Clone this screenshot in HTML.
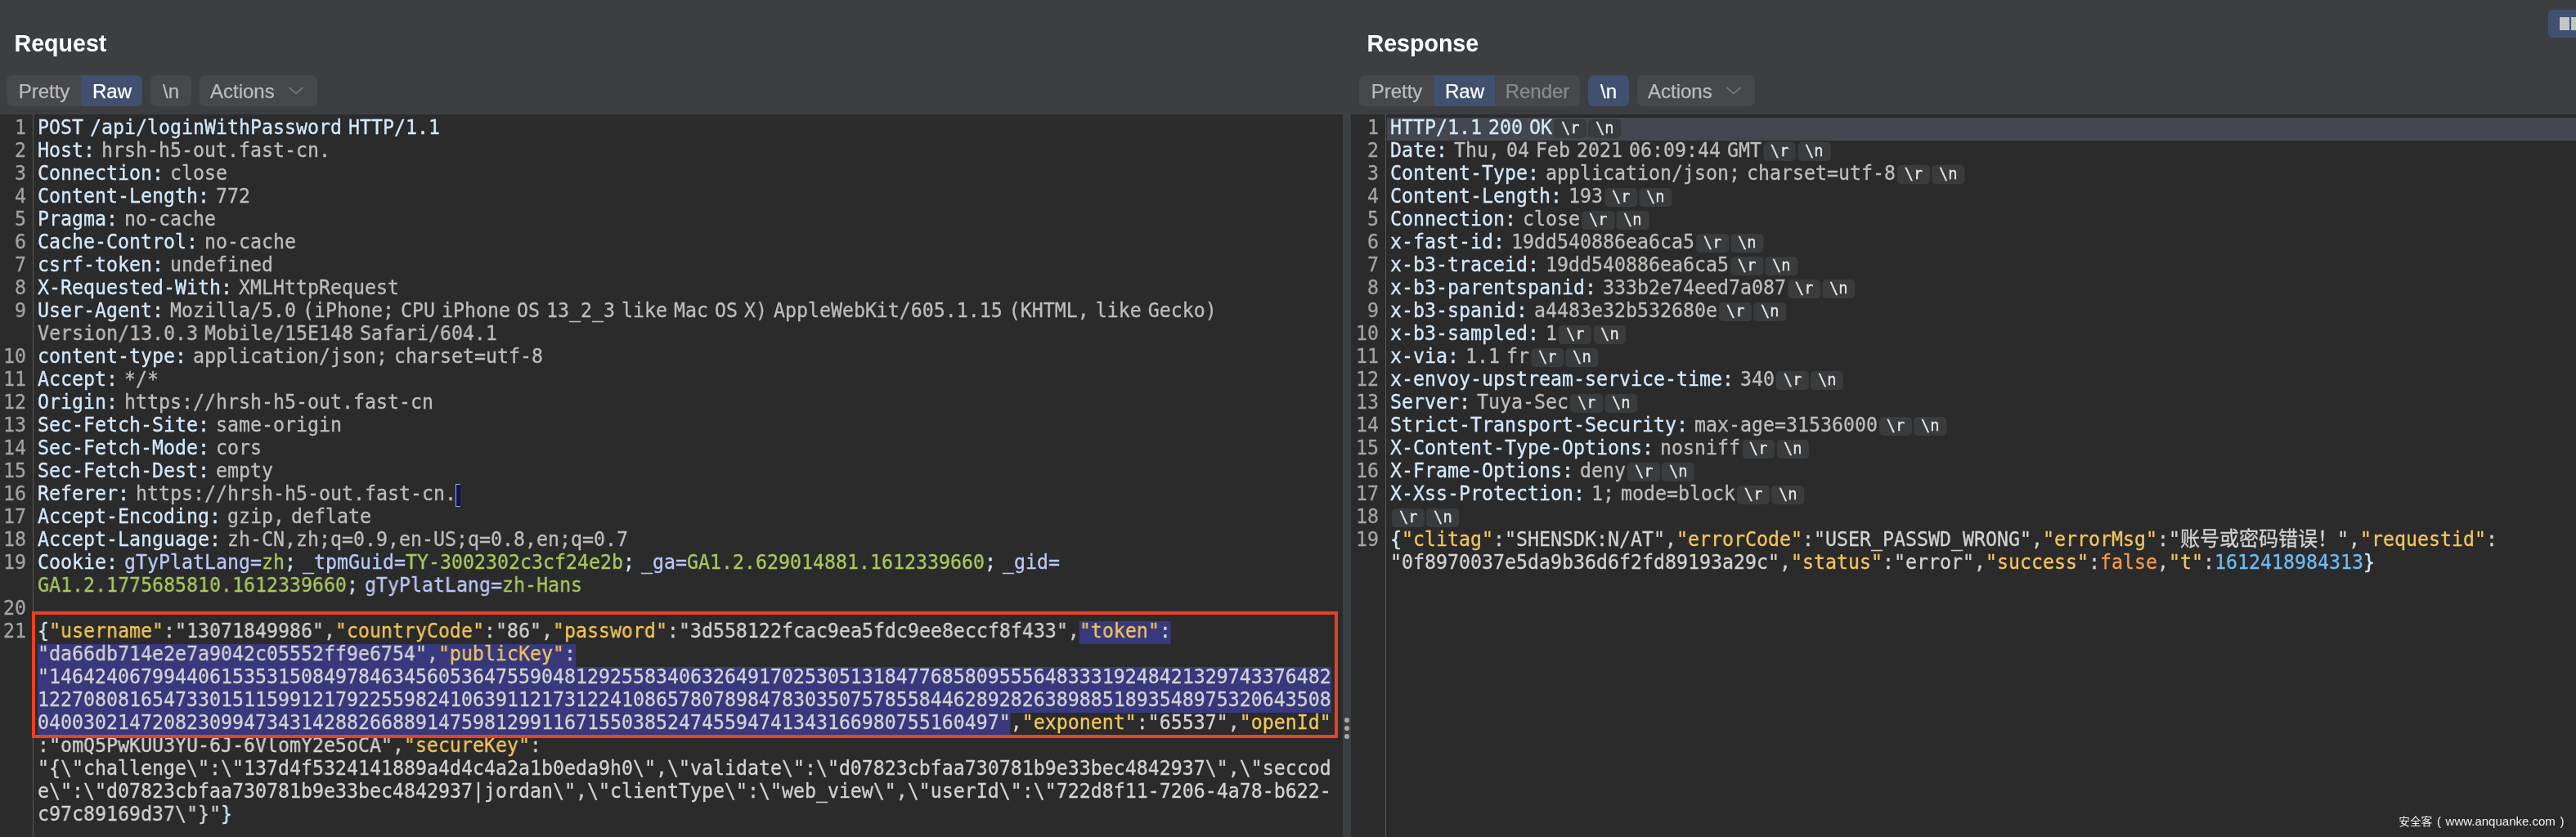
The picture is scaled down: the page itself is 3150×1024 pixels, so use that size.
<!DOCTYPE html>
<html lang="en"><head><meta charset="utf-8"><title>Burp Suite - Request / Response</title>
<style>
*{margin:0;padding:0;box-sizing:border-box}
html,body{width:3150px;height:1024px;overflow:hidden;background:#2b2b2b}
body{position:relative;font-family:"Liberation Sans",sans-serif}
.abs{position:absolute}
#wrap{position:absolute;left:0;top:0;width:3150px;height:1024px;will-change:transform}
#top{left:0;top:0;width:3150px;height:140px;background:#3c3f41}
#split{left:1642px;top:140px;width:10px;height:884px;background:#3c3f41}
.dot{position:absolute;left:1644px;width:6px;height:6px;border-radius:3px;background:#a9a9a9}
.gl{position:absolute;top:140px;width:1px;height:884px;background:#555759}
h1{position:absolute;font-size:28.6px;font-weight:bold;color:#fff;line-height:34px;white-space:nowrap}
.btn{position:absolute;top:92px;height:38px;background:#47484a;color:#bbbbbb;font-size:24px;line-height:40px;text-align:center;white-space:nowrap;-webkit-text-stroke:0.25px}
.btn.on{background:#40506f;color:#fff}
.btn.dis{color:#8a8a8a}
.rl{border-radius:7px 0 0 7px}.rr{border-radius:0 7px 7px 0}.ra{border-radius:7px}
.row,.ln{position:absolute;font-family:"DejaVu Sans Mono","Liberation Mono",monospace;font-size:24.3px;line-height:28px;height:28px;white-space:pre;transform:scaleX(0.95695);word-spacing:-6.270px;-webkit-text-stroke:0.3px}
.row{transform-origin:0 0}
.ln{width:60px;text-align:right;color:#a3a3a3;transform-origin:100% 0}
.h{color:#d2e9fb}.v{color:#bfbdbb}.s{color:#d2d2d2}.k{color:#f2c55c}.cn{color:#b9c8f7}.cv{color:#a8c760}.sc{color:#d4e6f6}.b{color:#f29950}.n{color:#6ebbf3}
.cjk{font-family:"Liberation Sans","Noto Sans CJK SC","WenQuanYi Zen Hei",sans-serif;color:#d2d2d2;font-size:25.08px;line-height:0}
.sel{position:relative;display:inline-block;height:28px;vertical-align:top}
.sel::before{content:"";position:absolute;left:0;right:0;top:2.2px;height:28px;background:#38387c;z-index:-1}
.nl{display:inline-block;vertical-align:top;width:41.80px;height:23.5px;margin:4.2px 0 0 2.30px;border-radius:5px;background:#393b3d;color:#e6e6e6;font-size:19.6px;line-height:21px;text-align:center;word-spacing:0}
.caret{display:inline-block;vertical-align:top;width:5.02px;height:28px;margin-top:2.2px;margin-left:-0.5px;background:#0c1158;border:1.5px solid #a9b1dd;border-right:none}
#hl{left:1696px;top:144px;width:1454px;height:28px;background:#444750}
#red{left:39px;top:748px;width:1597px;height:155px;border:4px solid #ea4025}
#wm{right:14.5px;top:995px;font-size:13.7px;line-height:20px;color:#f0f0f0;white-space:nowrap;font-family:"Liberation Sans","Noto Sans CJK SC",sans-serif}
#wm span{font-family:"Liberation Sans",sans-serif;font-size:15px;word-spacing:1.5px}
#ico{left:3116px;top:12px;width:50px;height:34px;border-radius:6px;background:#40506f}
#ico i{position:absolute;top:9px;width:12px;height:16px;background:#c4c4c4}
</style></head>
<body>
<div id="wrap">
<div id="top" class="abs"></div>
<div id="split" class="abs"></div>
<div class="dot" style="top:878px"></div>
<div class="dot" style="top:888px"></div>
<div class="dot" style="top:898px"></div>
<div id="ico" class="abs"><i style="left:14px"></i><i style="left:28px"></i></div>
<h1 style="left:17.5px;top:36px">Request</h1>
<div class="btn rl" style="left:8px;width:92px">Pretty</div>
<div class="btn on rr" style="left:100px;width:74px">Raw</div>
<div class="btn ra" style="left:184px;width:50px">\n</div>
<div class="btn ra" style="left:244px;width:144px;text-align:left;padding-left:13px">Actions<svg class="abs" style="left:108px;top:13px" width="20" height="12" viewBox="0 0 20 12"><path d="M1.5 2 L10 9.5 L18.5 2" fill="none" stroke="#737373" stroke-width="1.9"/></svg></div>
<h1 style="left:1671.5px;top:36px">Response</h1>
<div class="btn rl" style="left:1662px;width:92px">Pretty</div>
<div class="btn on" style="left:1754px;width:74px">Raw</div>
<div class="btn dis rr" style="left:1828px;width:104px">Render</div>
<div class="btn on ra" style="left:1942px;width:50px">\n</div>
<div class="btn ra" style="left:2002px;width:144px;text-align:left;padding-left:13px">Actions<svg class="abs" style="left:108px;top:13px" width="20" height="12" viewBox="0 0 20 12"><path d="M1.5 2 L10 9.5 L18.5 2" fill="none" stroke="#737373" stroke-width="1.9"/></svg></div>
<div class="gl" style="left:40px"></div>
<div class="gl" style="left:1694px"></div>
<div id="hl" class="abs"></div>
<div class="ln" style="top:141.8px;left:-28px">1</div>
<div class="row" style="top:141.8px;left:46px"><span class="h">POST /api/loginWithPassword HTTP/1.1</span></div>
<div class="ln" style="top:169.8px;left:-28px">2</div>
<div class="row" style="top:169.8px;left:46px"><span class="h">Host:</span><span class="v"> hrsh-h5-out.fast-cn.</span></div>
<div class="ln" style="top:197.8px;left:-28px">3</div>
<div class="row" style="top:197.8px;left:46px"><span class="h">Connection:</span><span class="v"> close</span></div>
<div class="ln" style="top:225.8px;left:-28px">4</div>
<div class="row" style="top:225.8px;left:46px"><span class="h">Content-Length:</span><span class="v"> 772</span></div>
<div class="ln" style="top:253.8px;left:-28px">5</div>
<div class="row" style="top:253.8px;left:46px"><span class="h">Pragma:</span><span class="v"> no-cache</span></div>
<div class="ln" style="top:281.8px;left:-28px">6</div>
<div class="row" style="top:281.8px;left:46px"><span class="h">Cache-Control:</span><span class="v"> no-cache</span></div>
<div class="ln" style="top:309.8px;left:-28px">7</div>
<div class="row" style="top:309.8px;left:46px"><span class="h">csrf-token:</span><span class="v"> undefined</span></div>
<div class="ln" style="top:337.8px;left:-28px">8</div>
<div class="row" style="top:337.8px;left:46px"><span class="h">X-Requested-With:</span><span class="v"> XMLHttpRequest</span></div>
<div class="ln" style="top:365.8px;left:-28px">9</div>
<div class="row" style="top:365.8px;left:46px"><span class="h">User-Agent:</span><span class="v"> Mozilla/5.0 (iPhone; CPU iPhone OS 13_2_3 like Mac OS X) AppleWebKit/605.1.15 (KHTML, like Gecko)</span></div>
<div class="row" style="top:393.8px;left:46px"><span class="v">Version/13.0.3 Mobile/15E148 Safari/604.1</span></div>
<div class="ln" style="top:421.8px;left:-28px">10</div>
<div class="row" style="top:421.8px;left:46px"><span class="h">content-type:</span><span class="v"> application/json; charset=utf-8</span></div>
<div class="ln" style="top:449.8px;left:-28px">11</div>
<div class="row" style="top:449.8px;left:46px"><span class="h">Accept:</span><span class="v"> */*</span></div>
<div class="ln" style="top:477.8px;left:-28px">12</div>
<div class="row" style="top:477.8px;left:46px"><span class="h">Origin:</span><span class="v"> https://hrsh-h5-out.fast-cn</span></div>
<div class="ln" style="top:505.8px;left:-28px">13</div>
<div class="row" style="top:505.8px;left:46px"><span class="h">Sec-Fetch-Site:</span><span class="v"> same-origin</span></div>
<div class="ln" style="top:533.8px;left:-28px">14</div>
<div class="row" style="top:533.8px;left:46px"><span class="h">Sec-Fetch-Mode:</span><span class="v"> cors</span></div>
<div class="ln" style="top:561.8px;left:-28px">15</div>
<div class="row" style="top:561.8px;left:46px"><span class="h">Sec-Fetch-Dest:</span><span class="v"> empty</span></div>
<div class="ln" style="top:589.8px;left:-28px">16</div>
<div class="row" style="top:589.8px;left:46px"><span class="h">Referer:</span><span class="v"> https://hrsh-h5-out.fast-cn.</span><i class="caret"></i></div>
<div class="ln" style="top:617.8px;left:-28px">17</div>
<div class="row" style="top:617.8px;left:46px"><span class="h">Accept-Encoding:</span><span class="v"> gzip, deflate</span></div>
<div class="ln" style="top:645.8px;left:-28px">18</div>
<div class="row" style="top:645.8px;left:46px"><span class="h">Accept-Language:</span><span class="v"> zh-CN,zh;q=0.9,en-US;q=0.8,en;q=0.7</span></div>
<div class="ln" style="top:673.8px;left:-28px">19</div>
<div class="row" style="top:673.8px;left:46px"><span class="h">Cookie:</span><span class="v"> </span><span class="cn">gTyPlatLang=</span><span class="cv">zh</span><span class="sc">; </span><span class="cn">_tpmGuid=</span><span class="cv">TY-3002302c3cf24e2b</span><span class="sc">; </span><span class="cn">_ga=</span><span class="cv">GA1.2.629014881.1612339660</span><span class="sc">; </span><span class="cn">_gid=</span></div>
<div class="row" style="top:701.8px;left:46px"><span class="cv">GA1.2.1775685810.1612339660</span><span class="sc">; </span><span class="cn">gTyPlatLang=</span><span class="cv">zh-Hans</span></div>
<div class="ln" style="top:729.8px;left:-28px">20</div>
<div class="ln" style="top:757.8px;left:-28px">21</div>
<div class="row" style="top:757.8px;left:46px"><span class="h">{</span><span class="k">"username"</span><span class="s">:"13071849986",</span><span class="k">"countryCode"</span><span class="s">:"86",</span><span class="k">"password"</span><span class="s">:"3d558122fcac9ea5fdc9ee8eccf8f433",</span><span class="sel"><span class="k">"token"</span><span class="s">:</span></span></div>
<div class="row" style="top:785.8px;left:46px"><span class="sel"><span class="s">"da66db714e2e7a9042c05552ff9e6754",</span><span class="k">"publicKey"</span><span class="s">:</span></span></div>
<div class="row" style="top:813.8px;left:46px"><span class="sel"><span class="s">"1464240679944061535315084978463456053647559048129255834063264917025305131847768580955564833319248421329743376482</span></span></div>
<div class="row" style="top:841.8px;left:46px"><span class="sel"><span class="s">12270808165473301511599121792255982410639112173122410865780789847830350757855844628928263898851893548975320643508</span></span></div>
<div class="row" style="top:869.8px;left:46px"><span class="sel"><span class="s">040030214720823099473431428826688914759812991167155038524745594741343166980755160497"</span></span><span class="s">,</span><span class="k">"exponent"</span><span class="s">:"65537",</span><span class="k">"openId"</span></div>
<div class="row" style="top:897.8px;left:46px"><span class="s">:"omQ5PwKUU3YU-6J-6VlomY2e5oCA",</span><span class="k">"secureKey"</span><span class="s">:</span></div>
<div class="row" style="top:925.8px;left:46px"><span class="s">"{\"challenge\":\"137d4f5324141889a4d4c4a2a1b0eda9h0\",\"validate\":\"d07823cbfaa730781b9e33bec4842937\",\"seccod</span></div>
<div class="row" style="top:953.8px;left:46px"><span class="s">e\":\"d07823cbfaa730781b9e33bec4842937|jordan\",\"clientType\":\"web_view\",\"userId\":\"722d8f11-7206-4a78-b622-</span></div>
<div class="row" style="top:981.8px;left:46px"><span class="s">c97c89169d37\"}"</span><span class="h">}</span></div>
<div class="ln" style="top:141.8px;left:1626px">1</div>
<div class="row" style="top:141.8px;left:1700px"><span class="h">HTTP/1.1 200 OK</span><span class="nl">\r</span><span class="nl">\n</span></div>
<div class="ln" style="top:169.8px;left:1626px">2</div>
<div class="row" style="top:169.8px;left:1700px"><span class="h">Date:</span><span class="v"> Thu, 04 Feb 2021 06:09:44 GMT</span><span class="nl">\r</span><span class="nl">\n</span></div>
<div class="ln" style="top:197.8px;left:1626px">3</div>
<div class="row" style="top:197.8px;left:1700px"><span class="h">Content-Type:</span><span class="v"> application/json; charset=utf-8</span><span class="nl">\r</span><span class="nl">\n</span></div>
<div class="ln" style="top:225.8px;left:1626px">4</div>
<div class="row" style="top:225.8px;left:1700px"><span class="h">Content-Length:</span><span class="v"> 193</span><span class="nl">\r</span><span class="nl">\n</span></div>
<div class="ln" style="top:253.8px;left:1626px">5</div>
<div class="row" style="top:253.8px;left:1700px"><span class="h">Connection:</span><span class="v"> close</span><span class="nl">\r</span><span class="nl">\n</span></div>
<div class="ln" style="top:281.8px;left:1626px">6</div>
<div class="row" style="top:281.8px;left:1700px"><span class="h">x-fast-id:</span><span class="v"> 19dd540886ea6ca5</span><span class="nl">\r</span><span class="nl">\n</span></div>
<div class="ln" style="top:309.8px;left:1626px">7</div>
<div class="row" style="top:309.8px;left:1700px"><span class="h">x-b3-traceid:</span><span class="v"> 19dd540886ea6ca5</span><span class="nl">\r</span><span class="nl">\n</span></div>
<div class="ln" style="top:337.8px;left:1626px">8</div>
<div class="row" style="top:337.8px;left:1700px"><span class="h">x-b3-parentspanid:</span><span class="v"> 333b2e74eed7a087</span><span class="nl">\r</span><span class="nl">\n</span></div>
<div class="ln" style="top:365.8px;left:1626px">9</div>
<div class="row" style="top:365.8px;left:1700px"><span class="h">x-b3-spanid:</span><span class="v"> a4483e32b532680e</span><span class="nl">\r</span><span class="nl">\n</span></div>
<div class="ln" style="top:393.8px;left:1626px">10</div>
<div class="row" style="top:393.8px;left:1700px"><span class="h">x-b3-sampled:</span><span class="v"> 1</span><span class="nl">\r</span><span class="nl">\n</span></div>
<div class="ln" style="top:421.8px;left:1626px">11</div>
<div class="row" style="top:421.8px;left:1700px"><span class="h">x-via:</span><span class="v"> 1.1 fr</span><span class="nl">\r</span><span class="nl">\n</span></div>
<div class="ln" style="top:449.8px;left:1626px">12</div>
<div class="row" style="top:449.8px;left:1700px"><span class="h">x-envoy-upstream-service-time:</span><span class="v"> 340</span><span class="nl">\r</span><span class="nl">\n</span></div>
<div class="ln" style="top:477.8px;left:1626px">13</div>
<div class="row" style="top:477.8px;left:1700px"><span class="h">Server:</span><span class="v"> Tuya-Sec</span><span class="nl">\r</span><span class="nl">\n</span></div>
<div class="ln" style="top:505.8px;left:1626px">14</div>
<div class="row" style="top:505.8px;left:1700px"><span class="h">Strict-Transport-Security:</span><span class="v"> max-age=31536000</span><span class="nl">\r</span><span class="nl">\n</span></div>
<div class="ln" style="top:533.8px;left:1626px">15</div>
<div class="row" style="top:533.8px;left:1700px"><span class="h">X-Content-Type-Options:</span><span class="v"> nosniff</span><span class="nl">\r</span><span class="nl">\n</span></div>
<div class="ln" style="top:561.8px;left:1626px">16</div>
<div class="row" style="top:561.8px;left:1700px"><span class="h">X-Frame-Options:</span><span class="v"> deny</span><span class="nl">\r</span><span class="nl">\n</span></div>
<div class="ln" style="top:589.8px;left:1626px">17</div>
<div class="row" style="top:589.8px;left:1700px"><span class="h">X-Xss-Protection:</span><span class="v"> 1; mode=block</span><span class="nl">\r</span><span class="nl">\n</span></div>
<div class="ln" style="top:617.8px;left:1626px">18</div>
<div class="row" style="top:617.8px;left:1700px"><span class="nl">\r</span><span class="nl">\n</span></div>
<div class="ln" style="top:645.8px;left:1626px">19</div>
<div class="row" style="top:645.8px;left:1700px"><span class="h">{</span><span class="k">"clitag"</span><span class="s">:"SHENSDK:N/AT",</span><span class="k">"errorCode"</span><span class="s">:"USER_PASSWD_WRONG",</span><span class="k">"errorMsg"</span><span class="s">:"</span><span class="cjk">账号或密码错误！</span><span class="s">",</span><span class="k">"requestid"</span><span class="s">:</span></div>
<div class="row" style="top:673.8px;left:1700px"><span class="s">"0f8970037e5da9b36d6f2fd89193a29c",</span><span class="k">"status"</span><span class="s">:"error",</span><span class="k">"success"</span><span class="s">:</span><span class="b">false</span><span class="s">,</span><span class="k">"t"</span><span class="s">:</span><span class="n">1612418984313</span><span class="h">}</span></div>
<div id="red" class="abs"></div>
<div id="wm" class="abs">安全客<span> ( www.anquanke.com )</span></div>
</div>
</body></html>
